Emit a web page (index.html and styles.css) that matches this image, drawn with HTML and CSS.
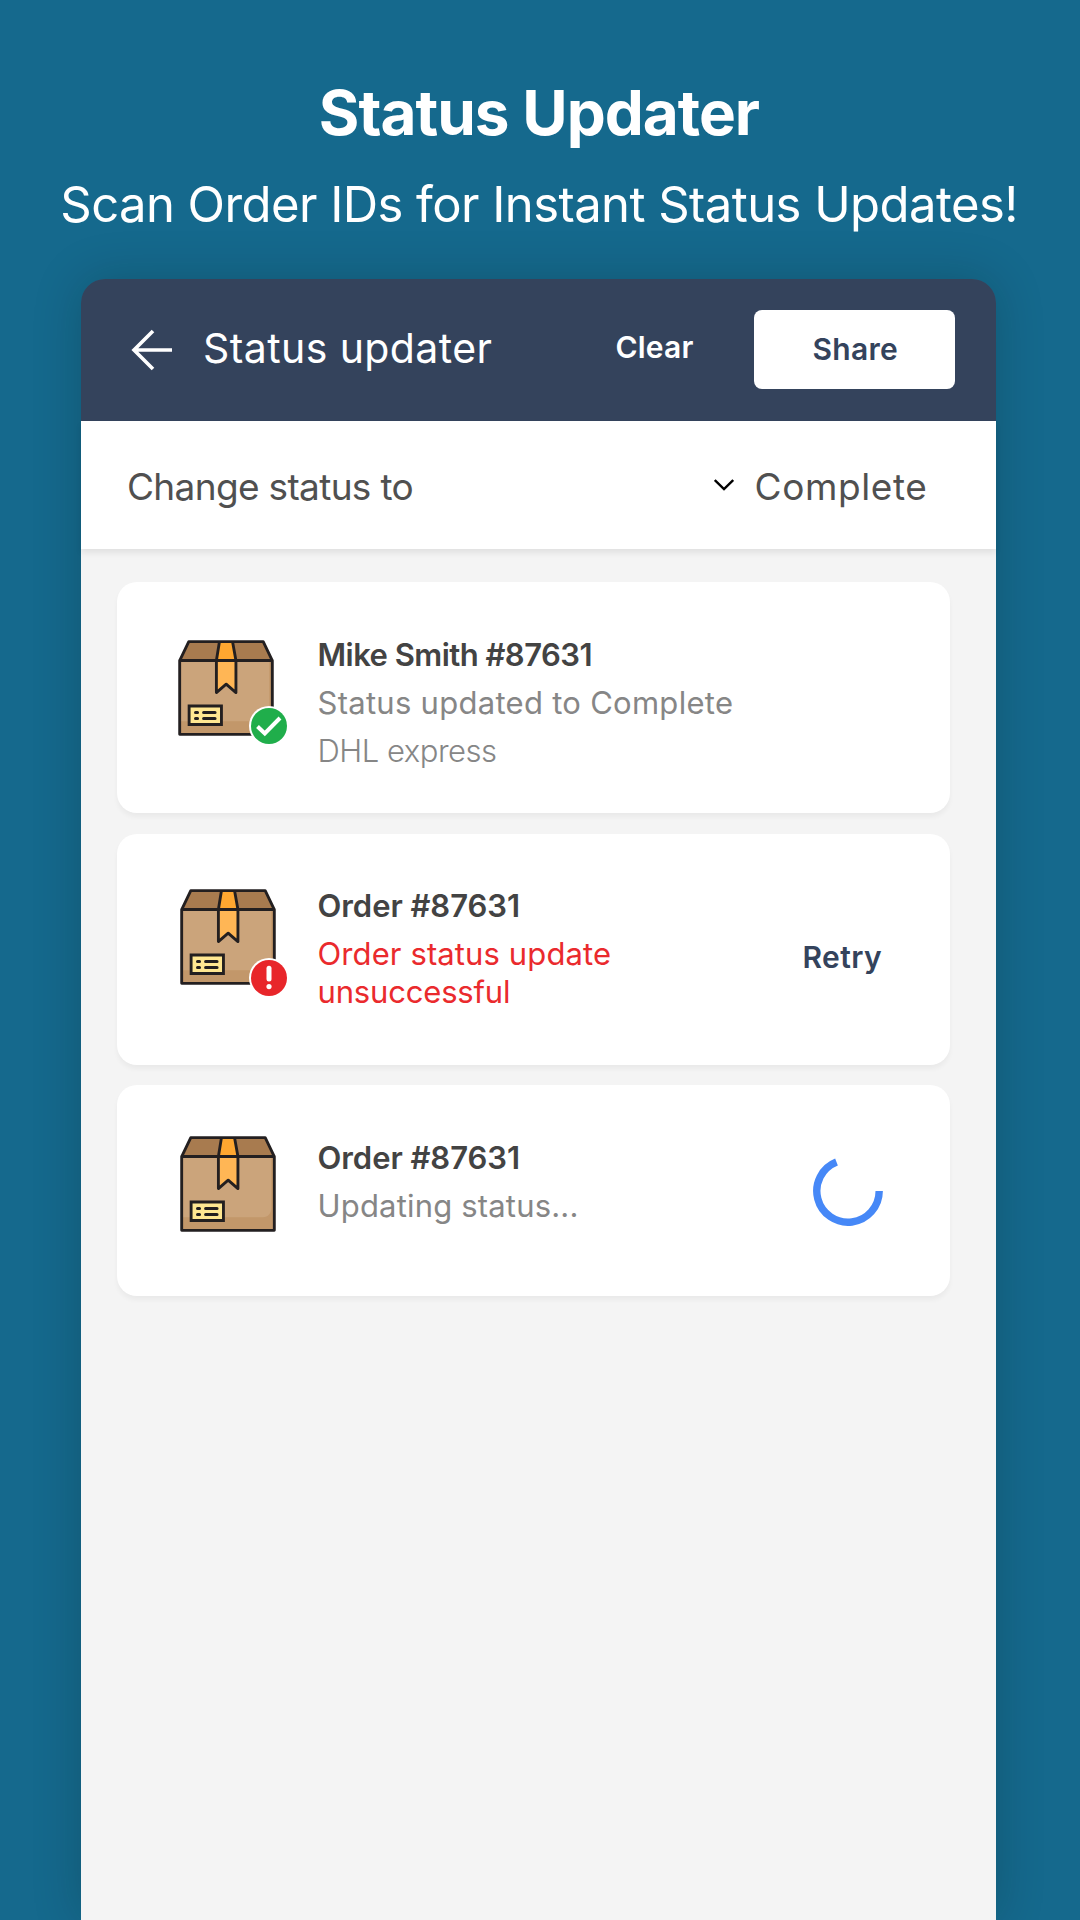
FILE: index.html
```html
<!DOCTYPE html>
<html lang="en">
<head>
<meta charset="utf-8">
<title>Status Updater</title>
<link rel="stylesheet" href="styles.css">
</head>
<body>
<svg class="defs" aria-hidden="true">
  <symbol id="parcel" viewBox="0 0 285 285">
    <path d="M5 61H280V280H5Z" fill="#cba47b"/>
    <path d="M5 241H246C262 241 271 230 271 214V61H280V280H5Z" fill="#c2976a"/>
    <path d="M32 5H253L280 61H5Z" fill="#a87b4f"/>
    <path d="M123 5H161L171 61H113Z" fill="#ffa730"/>
    <path d="M114 61H172V156L143 131L114 156Z" fill="#ffb655"/>
    <path d="M33 196H129V251H33Z" fill="#ffe791"/>
    <g fill="none" stroke="#231f20" stroke-width="8.5" stroke-linejoin="round" stroke-linecap="round">
      <path d="M5 61V280H280V61L253 5H32L5 61H280M123 5L114 61V156L143 131L172 156V61L162 5"/>
      <path stroke-linejoin="miter" d="M33 196H129V251H33Z"/>
      <path stroke-width="9" d="M52 215H58M76 215H110M52 233H58M76 233H110"/>
    </g>
  </symbol>
</svg>
<header class="hero">
  <h1 class="hero-title">Status Updater</h1>
  <p class="hero-sub">Scan Order IDs for Instant Status Updates!</p>
</header>
<main class="phone">
  <div class="appbar">
    <svg class="back" viewBox="0 0 42 42" fill="none" stroke="#fff" stroke-width="3.6"><path d="M41 21H3M22 2L3 21L22 40"/></svg>
    <h2 class="appbar-title">Status updater</h2>
    <span class="clear">Clear</span>
    <span class="share">Share</span>
  </div>
  <div class="filter">
    <span class="filter-label">Change status to</span>
    <svg class="chevron" viewBox="0 0 20 12" fill="none" stroke="#000" stroke-width="2.4"><path d="M.8 1L10 10L19.2 1"/></svg>
    <span class="filter-value">Complete</span>
  </div>
  <div class="list">
    <article class="card card-done">
      <div class="thumb">
        <svg class="parcel"><use href="#parcel"/></svg>
        <svg class="badge" viewBox="0 0 40 40"><circle cx="20" cy="20" r="20" fill="#fff"/><circle cx="20" cy="20" r="18" fill="#20ae4b"/><path d="M8.5 20.5L15.8 27.5L31 12" fill="none" stroke="#fff" stroke-width="4"/></svg>
      </div>
      <div class="info">
        <h3 class="name name-customer">Mike Smith #87631</h3>
        <p class="line line-status">Status updated to Complete</p>
        <p class="line line-carrier">DHL express</p>
      </div>
    </article>
    <article class="card card-failed">
      <div class="thumb">
        <svg class="parcel"><use href="#parcel"/></svg>
        <svg class="badge" viewBox="0 0 40 40"><circle cx="20" cy="20" r="20" fill="#fff"/><circle cx="20" cy="20" r="18" fill="#e8262a"/><path d="M20 10.3V21" stroke="#fff" stroke-width="5" stroke-linecap="round"/><circle cx="20" cy="28.6" r="2.6" fill="#fff"/></svg>
      </div>
      <div class="info">
        <h3 class="name">Order #87631</h3>
        <p class="error">Order status update<br><span class="error-end">unsuccessful</span></p>
      </div>
      <span class="retry">Retry</span>
    </article>
    <article class="card card-pending">
      <div class="thumb">
        <svg class="parcel"><use href="#parcel"/></svg>
      </div>
      <div class="info">
        <h3 class="name">Order #87631</h3>
        <p class="line line-pending">Updating status...</p>
      </div>
      <svg class="spinner" viewBox="0 0 70 70" fill="none" stroke="#4688f7" stroke-width="7.4"><path d="M66.2 35A31.2 31.2 0 1 1 23.5 6"/></svg>
    </article>
  </div>
</main>
</body>
</html>
```
FILE: styles.css
```css
* { box-sizing: border-box; margin: 0; padding: 0; }
html, body { height: 1920px; }
body {
  display: flex;
  flex-direction: column;
  overflow: hidden;
  background: #15698d;
  font-family: Inter, "Liberation Sans", sans-serif;
}
svg { display: block; flex: none; }
.defs { position: absolute; width: 0; height: 0; }

.hero { height: 279px; padding: 72.5px 2px 0 0; color: #fff; text-align: center; white-space: nowrap; }
.hero-title { font-size: 62px; line-height: 80px; font-weight: 700; letter-spacing: -0.99px; }
.hero-sub { margin-top: 20px; font-size: 49px; line-height: 64px; letter-spacing: -0.56px; }

.phone {
  flex: 1;
  width: 915px;
  margin-left: 81px;
  border-radius: 24px 24px 0 0;
  background: linear-gradient(#34435c 142px, #f4f4f4 142px);
  box-shadow: 0 0 50px rgba(0, 20, 10, .2);
}
.appbar {
  display: flex;
  align-items: center;
  height: 142px;
  padding: 0 41px 2px 49.5px;
  color: #fff;
}
.back { width: 42px; height: 42px; margin-top: 2px; }
.appbar-title { width: 410px; margin: -2px 0 0 30.5px; font-size: 41px; line-height: 50px; font-weight: 400; letter-spacing: .41px; }
.clear { margin: -5px auto 0 2.5px; font-size: 30px; font-weight: 600; letter-spacing: .2px; }
.share {
  width: 201px;
  height: 79px;
  padding-left: 1.5px;
  border-radius: 8px;
  background: #fff;
  color: #34435c;
  text-align: center;
  font-size: 30px;
  line-height: 79px;
  font-weight: 600;
  letter-spacing: .3px;
}
.filter {
  display: flex;
  align-items: center;
  height: 127.5px;
  padding: 4px 68.5px 0 46px;
  background: #fff;
  box-shadow: 0 4px 6px rgba(0, 0, 0, .08);
  color: #505050;
  font-size: 37px;
}
.filter-label { letter-spacing: -.66px; }
.chevron { width: 20px; height: 12px; margin: -4px 21px 0 auto; }
.filter-value { letter-spacing: .6px; }

.list { display: flex; flex-direction: column; gap: 20.5px; padding: 33.5px 46px 0 36px; }
.card {
  display: flex;
  height: 231px;
  padding-right: 66px;
  border-radius: 20px;
  background: #fff;
  box-shadow: 0 4px 5px rgba(0, 0, 0, .045);
}
.card-pending { height: 211px; }
.thumb { position: relative; flex: none; width: 200.5px; padding: 55.5px 0 0 63.2px; }
.card-done .thumb { padding: 58.2px 0 0 60.8px; }
.card-pending .thumb { padding-top: 50.7px; }
.parcel { width: 96px; height: 96px; }
.badge { position: absolute; left: 132.2px; top: 124px; width: 40px; height: 40px; }
.info { flex: 1; padding-top: 48.4px; white-space: nowrap; }
.card-done .info, .card-pending .info { padding-top: 49.2px; }
.name { color: #434343; font-size: 31px; line-height: 48px; font-weight: 600; letter-spacing: -.05px; }
.name-customer { letter-spacing: -.53px; }
.line { color: #868686; font-size: 31px; line-height: 48px; }
.line-status { letter-spacing: .28px; }
.line-carrier { font-weight: 300; letter-spacing: -.49px; }
.line-pending { letter-spacing: .18px; }
.error { margin-top: 5px; color: #ea2a2d; font-size: 31px; line-height: 38px; letter-spacing: .11px; }
.error-end { letter-spacing: -.17px; }
.retry { align-self: center; margin: 16px 2px 0 0; color: #34435c; font-size: 30px; line-height: 36px; font-weight: 600; letter-spacing: .4px; }
.spinner { width: 70px; height: 70px; margin: 70.8px 1.5px 0 0; }
```
